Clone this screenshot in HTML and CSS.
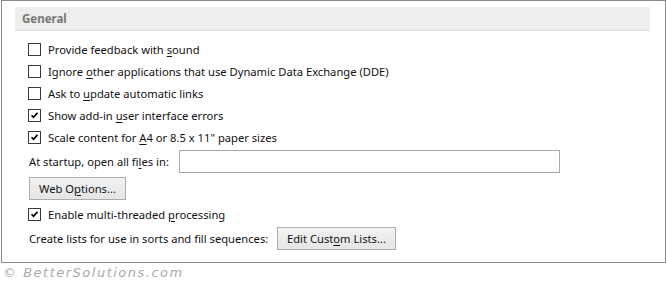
FILE: index.html
```html
<!DOCTYPE html>
<html lang="en">
<head>
  <meta charset="UTF-8">
  <title>Excel Options - General</title>
  <link rel="stylesheet" href="styles.css">
</head>
<body>
  <div class="panel">
    <div class="section-head">General</div>

    <div class="options">
      <label class="check-row">
        <span class="box"></span>
        Provide feedback with&nbsp;<u>s</u>ound
      </label>
      <label class="check-row">
        <span class="box"></span>
        Ignore&nbsp;<u>o</u>ther applications that use Dynamic Data Exchange (DDE)
      </label>
      <label class="check-row">
        <span class="box"></span>
        Ask to&nbsp;<u>u</u>pdate automatic links
      </label>
      <label class="check-row">
        <span class="box checked"><svg viewBox="0 0 13 13"><path d="M3 6.2 L5.3 8.6 L10 3.4" /></svg></span>
        Show add-in&nbsp;<u>u</u>ser interface errors
      </label>
      <label class="check-row">
        <span class="box checked"><svg viewBox="0 0 13 13"><path d="M3 6.2 L5.3 8.6 L10 3.4" /></svg></span>
        Scale content for&nbsp;<u>A</u>4 or 8.5 x 11" paper sizes
      </label>

      <div class="field-row">
        <span class="field-label">At startup, open all fi<u>l</u>es in:</span>
        <input class="path-input" type="text">
      </div>

      <div class="btn-row">
        <button class="win-btn web-btn">Web O<u>p</u>tions...</button>
      </div>

      <label class="check-row">
        <span class="box checked"><svg viewBox="0 0 13 13"><path d="M3 6.2 L5.3 8.6 L10 3.4" /></svg></span>
        Enable multi-threaded&nbsp;<u>p</u>rocessing
      </label>

      <div class="field-row lists-row">
        <span class="field-label wide">Create lists for use in sorts and fill sequences:</span>
        <button class="win-btn lists-btn">Edit Cust<u>o</u>m Lists...</button>
      </div>
    </div>
  </div>

  <div class="watermark">© BetterSolutions.com</div>
</body>
</html>
```

FILE: styles.css
```css
* {
  margin: 0;
  padding: 0;
  box-sizing: border-box;
}

body {
  background: #fff;
  font-family: 'Noto Sans', 'Open Sans', sans-serif;
  font-size: 11.2px;
  color: #111;
  width: 666px;
}

.panel {
  margin-left: 1px;
  width: 665px;
  height: 263px;
  border: 1px solid #898989;
}

.section-head {
  margin: 6px 0 0 13px;
  width: 635px;
  height: 24px;
  padding-left: 7px;
  line-height: 23px;
  background: #eeeeee;
  border-bottom: 1px solid #dedede;
  color: #777;
  font-weight: bold;
  font-size: 11.5px;
}

.options {
  margin-top: 7px;
  padding-left: 26px;
}

.check-row {
  display: flex;
  align-items: center;
  height: 22px;
  white-space: nowrap;
}

.box {
  flex-shrink: 0;
  width: 13px;
  height: 13px;
  border: 1px solid #3a3a3a;
  background: #fff;
  margin-right: 7px;
  display: flex;
}

.box svg {
  width: 11px;
  height: 11px;
}

.box path {
  fill: none;
  stroke: #000;
  stroke-width: 2;
}

u {
  text-underline-offset: 2px;
}

.field-row {
  display: flex;
  align-items: center;
  height: 26px;
  padding-left: 1px;
}

.field-label {
  flex-shrink: 0;
  width: 150px;
  white-space: nowrap;
}

.field-label.wide {
  width: 248px;
}

.path-input {
  width: 381px;
  height: 23px;
  border: 1px solid #a8a8a8;
  outline: none;
}

.btn-row {
  display: flex;
  align-items: center;
  height: 29px;
  padding-left: 1px;
}

.win-btn {
  flex-shrink: 0;
  height: 23px;
  font-family: inherit;
  font-size: 11.2px;
  color: #111;
  background: linear-gradient(#f2f2f2, #e5e5e5);
  border: 1px solid #acacac;
}

.web-btn {
  width: 97px;
}

.lists-btn {
  width: 119px;
}

.watermark {
  margin: 2px 0 0 3px;
  font-family: 'DejaVu Sans', sans-serif;
  font-style: italic;
  font-size: 13px;
  letter-spacing: 1.5px;
  color: #aaa;
}
```
